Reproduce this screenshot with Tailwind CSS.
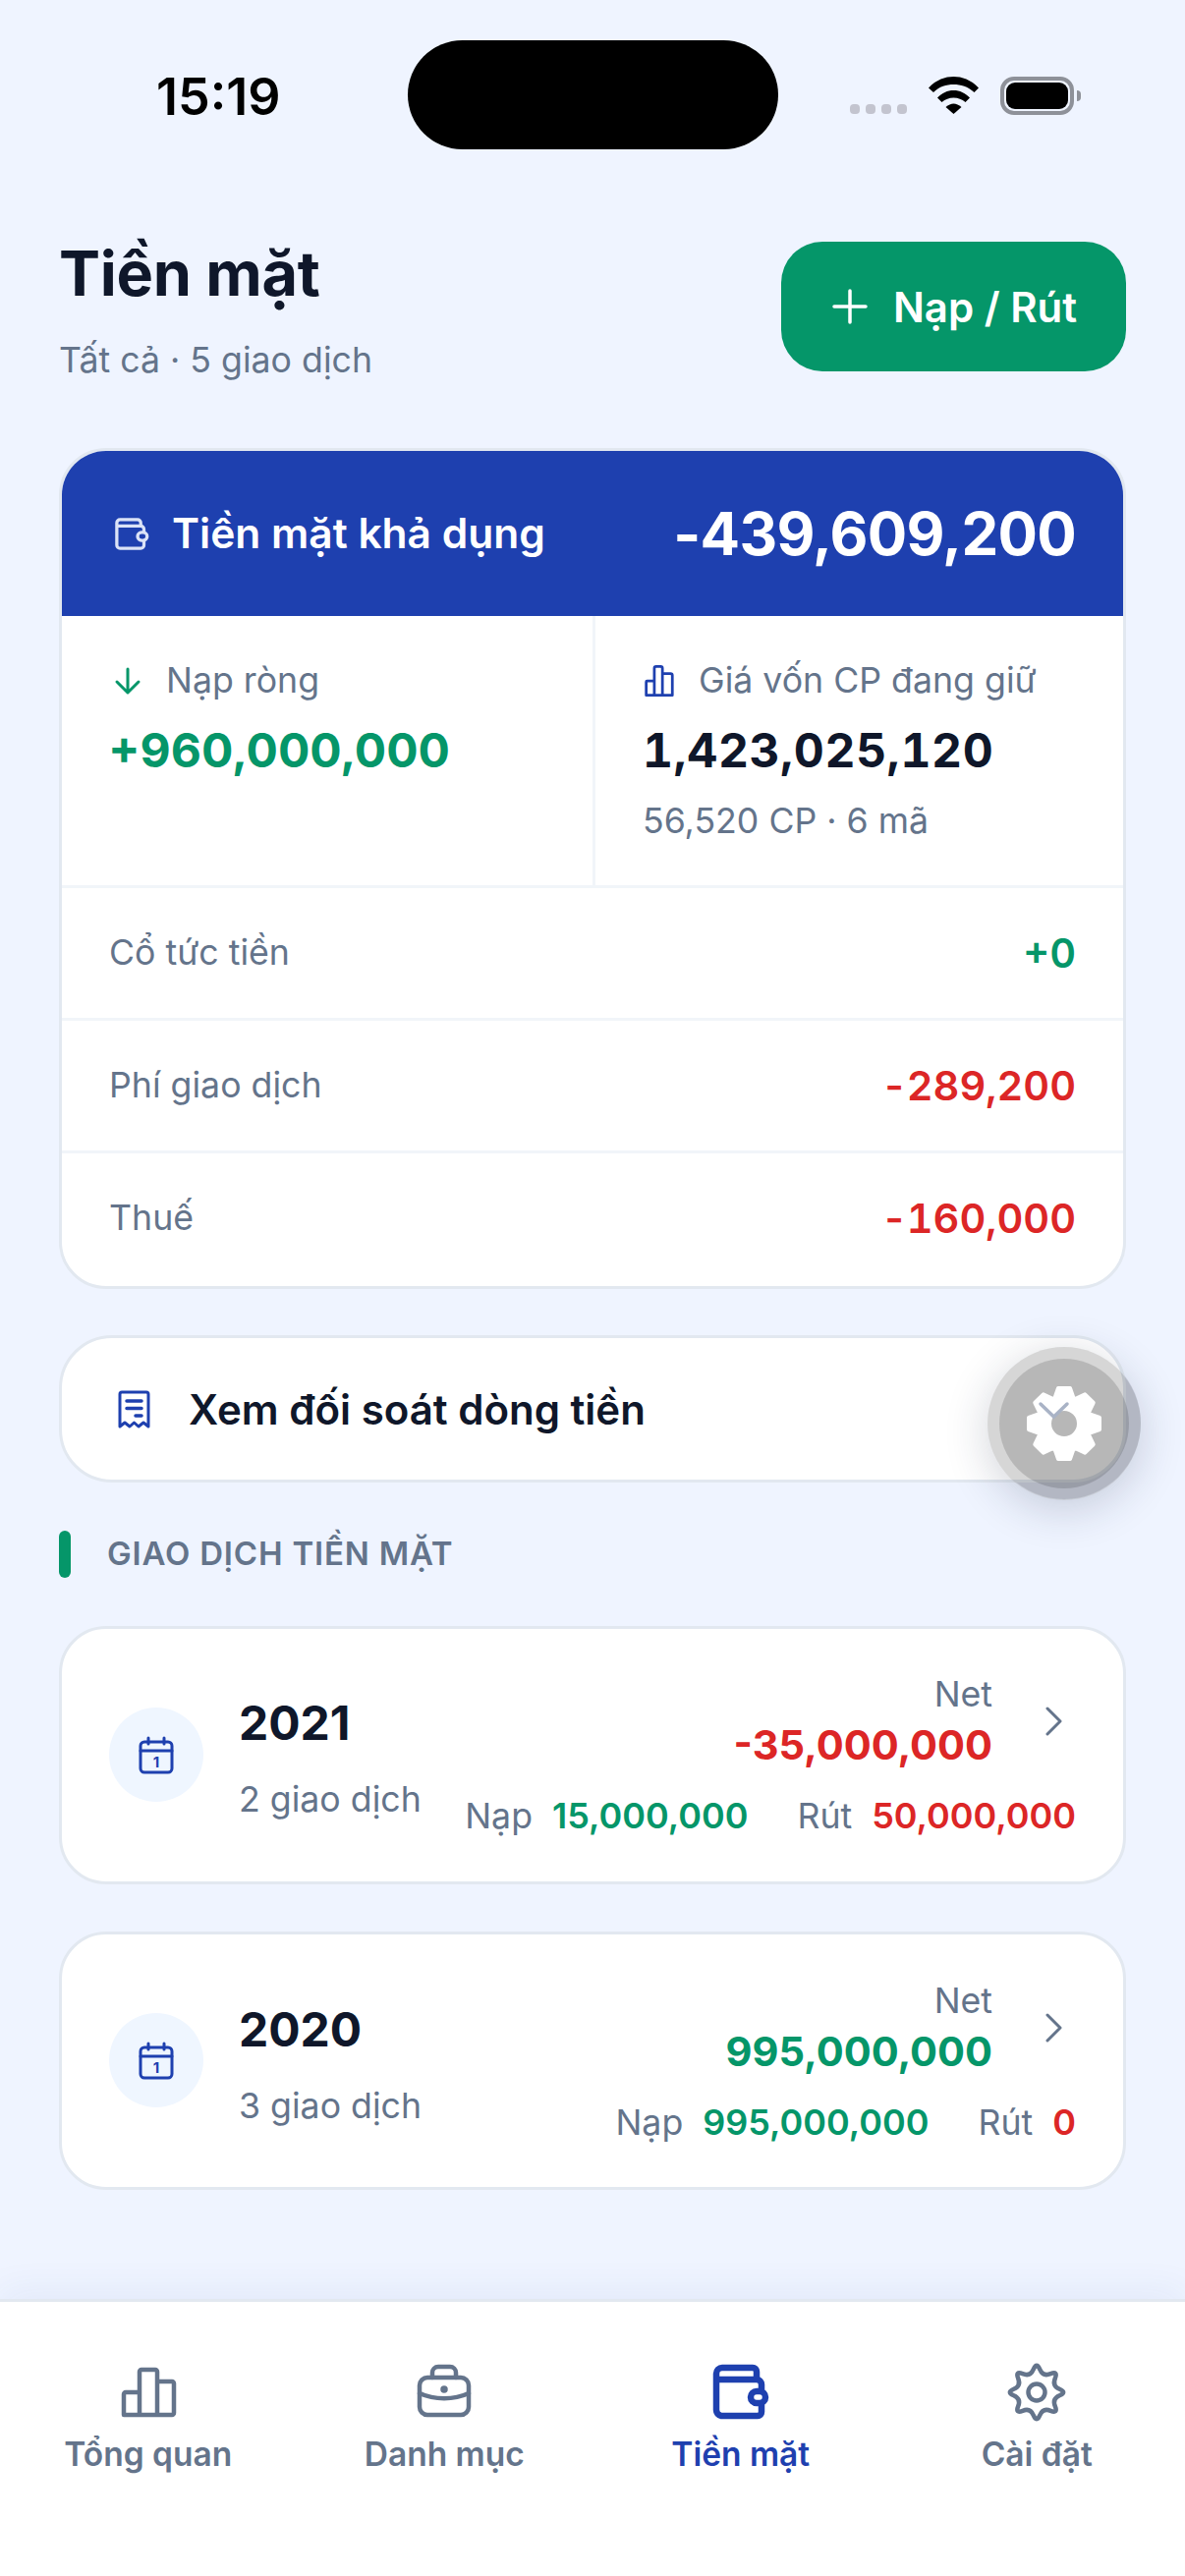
<!DOCTYPE html>
<html lang="vi">
<head>
  <meta charset="UTF-8" />
  <meta name="viewport" content="width=device-width, initial-scale=1" />
  <title>Tiền mặt</title>
  <script src="https://cdn.jsdelivr.net/npm/@tailwindcss/browser@4"></script>
</head>
<body class="bg-[#eff4ff] font-['Inter',sans-serif] text-[#0f172a]">
<div class="relative w-[1206px] h-[2622px] overflow-hidden bg-[#eff4ff]">

  <!-- status bar -->
  <div class="flex items-start h-[246px] pt-[41px]">
    <div class="w-[124px] ml-[159px] mt-[28px] text-[52px] leading-[60px] font-semibold text-black whitespace-nowrap">15:19</div>
    <div class="w-[377px] h-[111px] ml-[132px] rounded-full bg-black"></div>
    <div class="flex items-start ml-[73px]">
      <div class="flex gap-[6px] mt-[65px]">
        <span class="w-[10px] h-[10px] rounded-[4px] bg-[#c3c4cf]"></span>
        <span class="w-[10px] h-[10px] rounded-[4px] bg-[#c3c4cf]"></span>
        <span class="w-[10px] h-[10px] rounded-[4px] bg-[#c3c4cf]"></span>
        <span class="w-[10px] h-[10px] rounded-[4px] bg-[#c3c4cf]"></span>
      </div>
      <svg class="ml-[22px] mt-[37px]" width="51" height="38" viewBox="0 0 51 38" fill="#000">
        <path d="M0 11.500C8 3 17 0 25.500 0C34 0 43 3 51 11.500L46.500 16C40 10 33 8 25.500 8C18 8 11 10 5 16Z" />
        <path d="M9 21.500C14 16.500 19 14 25.500 14C32 14 37 16.500 42 21.500L37.500 26C34 23 30 21.500 25.500 21.500C21 21.500 17 23 13.500 26Z" />
        <path d="M17.500 31C20 29 23 27.500 25.500 27.500C28 27.500 31 29 33.500 31L25.500 38Z" />
      </svg>
      <div class="flex items-center ml-[22px] mt-[37px]">
        <div class="w-[75px] h-[39px] rounded-[14px] border-[4px] border-[#8e9199] p-[2px]">
          <div class="w-full h-full rounded-[9px] bg-black"></div>
        </div>
        <div class="w-[4px] h-[11px] ml-[3px] rounded-r-full bg-[#8e9199]"></div>
      </div>
    </div>
  </div>

  <main class="px-[60px]">
    <!-- header -->
    <div class="flex justify-between items-start h-[132px]">
      <div>
        <h1 class="text-[63px] leading-[72px] font-bold tracking-[-0.300px] -mt-[4px]">Tiền mặt</h1>
        <p class="mt-[30px] text-[35.700px] leading-[44px] text-[#64748b]">Tất cả · 5 giao dịch</p>
      </div>
      <button class="flex items-center justify-center gap-[26px] w-[351px] h-[132px] pl-[2px] rounded-[42px] bg-[#059669] text-white text-[42px] font-semibold">
        <svg width="36" height="36" viewBox="0 0 36 36" fill="none" stroke="#fff" stroke-width="3.500" stroke-linecap="round"><path d="M18 2V34M2 18H34" /></svg>
        <span>Nạp / Rút</span>
      </button>
    </div>

    <!-- summary card -->
    <section class="mt-[78px] rounded-[48px] border-[3px] border-[#e2e8f0] bg-white overflow-hidden">
      <div class="flex items-center justify-between h-[168px] px-[48px] bg-[#1e40af] text-white">
        <div class="flex items-center gap-[22px]">
          <svg class="ml-[3px]" width="39" height="39" viewBox="0 0 24 24" fill="none" stroke="#dbe3f7" stroke-width="2" stroke-linejoin="round">
            <path d="M20 16V19A2 2 0 0 1 18 21H5A2 2 0 0 1 3 19V5A2 2 0 0 1 5 3H16A2 2 0 0 1 18 5V7M3 7H18A2 2 0 0 1 20 9V11" />
            <rect x="16" y="11" width="6" height="5" rx="2.500" />
          </svg>
          <span class="text-[42.500px] font-semibold">Tiền mặt khả dụng</span>
        </div>
        <span class="text-[60px] font-bold tracking-[-0.700px]">-439,609,200</span>
      </div>

      <div class="grid grid-cols-[543px_1fr] h-[274px]">
        <div class="pl-[48px] pt-[42px] border-r-[3px] border-[#f1f5f9]">
          <div class="flex items-center gap-[24px] h-[48px]">
            <svg class="ml-[4px]" width="30" height="30" viewBox="0 0 30 30" fill="none" stroke="#059669" stroke-width="3" stroke-linecap="round" stroke-linejoin="round"><path d="M15 3V27M4 16L15 27L26 16" /></svg>
            <span class="text-[35.700px] text-[#64748b]">Nạp ròng</span>
          </div>
          <div class="mt-[17px] -ml-[1px] text-[48px] leading-[60px] font-bold text-[#059669]">+960,000,000</div>
        </div>
        <div class="pl-[48px] pt-[42px]">
          <div class="flex items-center gap-[24px] h-[48px]">
            <svg width="33" height="36" viewBox="0 0 36 36" fill="none" stroke="#1e40af" stroke-width="3" stroke-linejoin="round">
              <path d="M4 34V19A1 1 0 0 1 5 18H13V34ZM13 34V4A2 2 0 0 1 15 2H20A2 2 0 0 1 22 4V34ZM22 10H31A2 2 0 0 1 33 12V34H22Z M4 34H33" />
            </svg>
            <span class="text-[35.700px] text-[#64748b]">Giá vốn CP đang giữ</span>
          </div>
          <div class="mt-[17px] text-[48px] leading-[60px] font-bold tabular-nums tracking-[0.650px]">1,423,025,120</div>
          <div class="mt-[19px] text-[35.700px] leading-[44px] text-[#64748b]">56,520 CP · 6 mã</div>
        </div>
      </div>

      <div class="flex items-center justify-between h-[135px] px-[48px] border-t-[3px] border-[#f1f5f9]">
        <span class="text-[35.700px] text-[#64748b]">Cổ tức tiền</span>
        <span class="text-[41.500px] font-semibold tabular-nums text-[#059669]">+0</span>
      </div>
      <div class="flex items-center justify-between h-[135px] px-[48px] border-t-[3px] border-[#f1f5f9]">
        <span class="text-[35.700px] text-[#64748b]">Phí giao dịch</span>
        <span class="text-[41.500px] font-semibold tabular-nums text-[#dc2626]"><span class="normal-nums pr-[3px]">-</span>289,200</span>
      </div>
      <div class="flex items-center justify-between h-[138px] pb-[3px] px-[48px] border-t-[3px] border-[#f1f5f9]">
        <span class="text-[35.700px] text-[#64748b]">Thuế</span>
        <span class="text-[41.500px] font-semibold tabular-nums text-[#dc2626]"><span class="normal-nums pr-[3px]">-</span>160,000</span>
      </div>
    </section>

    <!-- reconciliation link -->
    <div class="relative mt-[47px]">
      <!-- darker part of the floating button, only seen outside the white card -->
      <div class="absolute left-[945px] top-[11px] w-[156px] h-[156px] rounded-full bg-[#9aa1b5]/30"></div>
      <a class="relative flex items-center gap-[39px] h-[150px] pl-[57px] rounded-[54px] border-[3px] border-[#e2e8f0] bg-white">
        <svg width="33" height="39" viewBox="0 0 33 39" fill="none" stroke="#1e40af" stroke-width="3" stroke-linecap="round" stroke-linejoin="round">
          <path d="M2 37V4A2 2 0 0 1 4 2H29A2 2 0 0 1 31 4V37L26 33L21 37L16.500 33L12 37L7 33Z" />
          <path d="M9 11H24M9 18.500H24M18 26H24" stroke-width="3.500" />
        </svg>
        <span class="text-[42px] font-semibold">Xem đối soát dòng tiền</span>
      </a>
    </div>

    <!-- section title -->
    <div class="flex items-center gap-[37px] mt-[48px]">
      <span class="w-[12px] h-[48px] rounded-full bg-[#059669]"></span>
      <h2 class="text-[33px] font-semibold tracking-[0.800px] text-[#64748b]">GIAO DỊCH TIỀN MẶT</h2>
    </div>

    <!-- 2021 -->
    <article class="flex items-center mt-[48px] h-[263px] pl-[48px] pr-[48px] rounded-[48px] border-[3px] border-[#e2e8f0] bg-white">
      <div class="flex items-center justify-center shrink-0 w-[96px] h-[96px] rounded-full bg-[#eff6ff]">
        <svg width="36" height="39" viewBox="0 0 36 39" fill="none" stroke="#1e40af" stroke-width="3" stroke-linecap="round">
          <rect x="2" y="6" width="32" height="31" rx="4" />
          <path d="M2 15H34M10 2V8M26 2V8" />
          <text x="18" y="32" text-anchor="middle" font-size="15" font-weight="700" fill="#1e40af" stroke="none" font-family="Inter">1</text>
        </svg>
      </div>
      <div class="ml-[36px] self-start mt-[66px] shrink-0">
        <div class="text-[48px] leading-[60px] font-bold">2021</div>
        <div class="mt-[25px] text-[35.700px] leading-[44px] text-[#64748b]">2 giao dịch</div>
      </div>
      <div class="flex-1 flex flex-col items-end self-start mt-[46px]">
        <div class="flex items-center">
          <div class="text-right">
            <div class="text-[35.700px] leading-[40px] text-[#64748b]">Net</div>
            <div class="text-[41.500px] leading-[52px] mt-[6px] font-bold text-[#dc2626]">-35,000,000</div>
          </div>
          <svg class="ml-[50px] mr-[11px] mb-[1px]" width="24" height="30" viewBox="0 0 24 30" fill="none" stroke="#64748b" stroke-width="3" stroke-linecap="round" stroke-linejoin="round"><path d="M6 2L19 15L6 28" /></svg>
        </div>
        <div class="flex items-baseline mt-[19px] text-[36px] leading-[54px]">
          <span class="text-[35.700px] text-[#64748b]">Nạp</span>
          <span class="ml-[20px] font-semibold text-[#059669]">15,000,000</span>
          <span class="ml-[50px] text-[35.700px] text-[#64748b]">Rút</span>
          <span class="ml-[20px] font-semibold text-[#dc2626]">50,000,000</span>
        </div>
      </div>
    </article>

    <!-- 2020 -->
    <article class="flex items-center mt-[48px] h-[263px] pl-[48px] pr-[48px] rounded-[48px] border-[3px] border-[#e2e8f0] bg-white">
      <div class="flex items-center justify-center shrink-0 w-[96px] h-[96px] rounded-full bg-[#eff6ff]">
        <svg width="36" height="39" viewBox="0 0 36 39" fill="none" stroke="#1e40af" stroke-width="3" stroke-linecap="round">
          <rect x="2" y="6" width="32" height="31" rx="4" />
          <path d="M2 15H34M10 2V8M26 2V8" />
          <text x="18" y="32" text-anchor="middle" font-size="15" font-weight="700" fill="#1e40af" stroke="none" font-family="Inter">1</text>
        </svg>
      </div>
      <div class="ml-[36px] self-start mt-[67px] shrink-0">
        <div class="text-[48px] leading-[60px] font-bold">2020</div>
        <div class="mt-[25px] text-[35.700px] leading-[44px] text-[#64748b]">3 giao dịch</div>
      </div>
      <div class="flex-1 flex flex-col items-end self-start mt-[47px]">
        <div class="flex items-center">
          <div class="text-right">
            <div class="text-[35.700px] leading-[40px] text-[#64748b]">Net</div>
            <div class="text-[41.500px] leading-[52px] mt-[6px] font-bold text-[#059669]">995,000,000</div>
          </div>
          <svg class="ml-[50px] mr-[11px] mb-[1px]" width="24" height="30" viewBox="0 0 24 30" fill="none" stroke="#64748b" stroke-width="3" stroke-linecap="round" stroke-linejoin="round"><path d="M6 2L19 15L6 28" /></svg>
        </div>
        <div class="flex items-baseline mt-[19px] text-[36px] leading-[54px]">
          <span class="text-[35.700px] text-[#64748b]">Nạp</span>
          <span class="ml-[20px] font-semibold text-[#059669]">995,000,000</span>
          <span class="ml-[50px] text-[35.700px] text-[#64748b]">Rút</span>
          <span class="ml-[20px] font-semibold text-[#dc2626]">0</span>
        </div>
      </div>
    </article>
  </main>

  <!-- floating settings button -->
  <div class="absolute left-[1005px] top-[1371px] flex items-center justify-center w-[156px] h-[156px] rounded-full bg-black/16 shadow-[0_9px_45px_rgba(30,41,70,0.2)]">
    <div class="relative flex items-center justify-center w-[132px] h-[132px] rounded-full bg-black/14">
      <svg width="84" height="84" viewBox="-42 -42 84 84">
        <path fill="#fff" stroke="#fff" stroke-width="4" stroke-linejoin="round" fill-rule="evenodd" d="M-9.500 -26L-6 -36L6 -36L9.500 -26L11.660 -25.100L21.220 -29.700L29.700 -21.220L25.100 -11.660L26 -9.500L36 -6L36 6L26 9.500L25.100 11.660L29.700 21.220L21.220 29.700L11.660 25.100L9.500 26L6 36L-6 36L-9.500 26L-11.660 25.100L-21.220 29.700L-29.700 21.220L-25.100 11.660L-26 9.500L-36 6L-36 -6L-26 -9.500L-25.100 -11.660L-29.700 -21.220L-21.220 -29.700L-11.660 -25.100ZM15 0A15 15 0 1 0 -15 0A15 15 0 1 0 15 0Z" />
        <path fill="none" stroke="#a9b3c6" stroke-width="3.500" stroke-linecap="round" d="M-24 -20L-10.500 -7L3 -20" />
      </svg>
    </div>
  </div>

  <!-- tab bar -->
  <nav class="absolute left-0 right-0 bottom-0 grid grid-cols-4 h-[282px] pt-[62px] border-t-[3px] border-[#e2e8f0] bg-white shadow-[0_-9px_36px_rgba(30,64,175,0.06)] text-[33.500px] font-semibold text-[#64748b]">
    <a class="flex flex-col items-center">
      <svg width="60" height="60" viewBox="0 0 60 60" fill="none" stroke="#64748b" stroke-width="4.500" stroke-linejoin="round">
        <path d="M5 53V32A2 2 0 0 1 7 30H21V53ZM21 53V9A2 2 0 0 1 23 7H37A2 2 0 0 1 39 9V53ZM39 19H54A2 2 0 0 1 56 21V51A2 2 0 0 1 54 53H7A2 2 0 0 1 5 51" />
      </svg>
      <span class="mt-[11px] leading-[44px]">Tổng quan</span>
    </a>
    <a class="flex flex-col items-center">
      <svg width="60" height="60" viewBox="0 0 60 60" fill="none" stroke="#64748b" stroke-width="4.500" stroke-linecap="round" stroke-linejoin="round">
        <rect x="5" y="15" width="50" height="38" rx="8" />
        <path d="M18 15V10A6 6 0 0 1 24 4H36A6 6 0 0 1 42 10V15" />
        <path d="M5 31C20 38 40 38 55 31" />
        <circle cx="30" cy="27" r="1.500" fill="#64748b" />
      </svg>
      <span class="mt-[11px] leading-[44px]">Danh mục</span>
    </a>
    <a class="flex flex-col items-center text-[#1e40af]">
      <svg width="60" height="60" viewBox="0 0 60 60" fill="none" stroke="#1e40af" stroke-width="6.500" stroke-linejoin="round">
        <path d="M51 41V50A4 4 0 0 1 47 54H10A6 6 0 0 1 5 48V11A6 6 0 0 1 11 5H42A4 4 0 0 1 46 9V15M5 17H46A5 5 0 0 1 51 22V29" />
        <rect x="40" y="29" width="15" height="12" rx="6" />
      </svg>
      <span class="mt-[11px] leading-[44px]">Tiền mặt</span>
    </a>
    <a class="flex flex-col items-center">
      <svg width="60" height="60" viewBox="-30 -30 60 60" fill="none" stroke="#64748b" stroke-width="4.500" stroke-linejoin="round">
        <path d="M23.350 -3.250Q31 0 23.350 3.250Q15.700 6.500 18.800 14.200Q21.900 21.900 14.200 18.800Q6.500 15.700 3.250 23.350Q0 31 -3.250 23.350Q-6.500 15.700 -14.200 18.800Q-21.900 21.900 -18.800 14.200Q-15.700 6.500 -23.350 3.250Q-31 0 -23.350 -3.250Q-15.700 -6.500 -18.800 -14.200Q-21.900 -21.900 -14.200 -18.800Q-6.500 -15.700 -3.250 -23.350Q0 -31 3.250 -23.350Q6.500 -15.700 14.200 -18.800Q21.900 -21.900 18.800 -14.200Q15.700 -6.500 23.350 -3.250Z" />
        <circle r="8.500" />
      </svg>
      <span class="mt-[11px] leading-[44px]">Cài đặt</span>
    </a>
  </nav>
</div>
</body>
</html>
